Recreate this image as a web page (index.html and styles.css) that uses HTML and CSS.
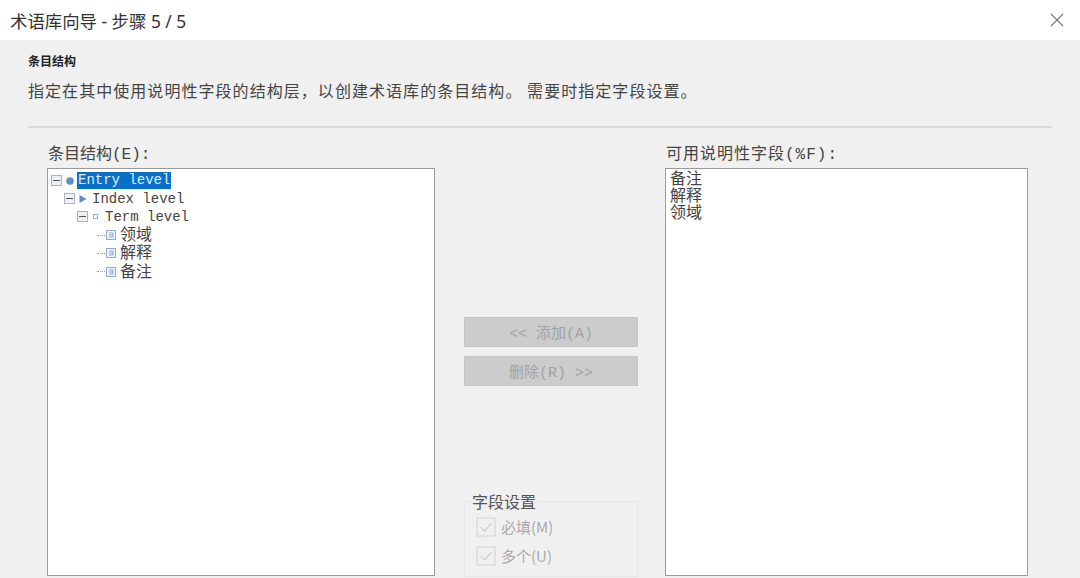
FILE: index.html
```html
<!DOCTYPE html>
<html lang="en">
<head>
    <meta charset="UTF-8">
    <meta name="viewport" content="width=device-width, initial-scale=1.0">
    <title>术语库向导</title>
    <link rel="stylesheet" href="styles.css">
</head>
<body>
    <div class="titlebar">
        <span class="title">术语库向导 - 步骤 5 / 5</span>
        <svg class="close" width="14" height="14" viewBox="0 0 14 14"><path d="M1 1 L13 13 M13 1 L1 13" stroke="#777" stroke-width="1.1" fill="none"/></svg>
    </div>

    <div class="content">
        <h1>条目结构</h1>
        <p class="desc">指定在其中使用说明性字段的结构层，以创建术语库的条目结构。 需要时指定字段设置。</p>
        <div class="divider"></div>

        <div class="columns">
            <!-- Entry structure tree -->
            <div class="col-left">
                <label class="field-label">条目结构(E):</label>
                <div class="listbox tree">
                    <div class="row">
                        <span class="toggle"></span>
                        <svg class="marker" width="10" height="10" viewBox="0 0 10 10"><circle cx="5" cy="5" r="3.8" fill="#5b8fc9"/></svg>
                        <span class="selected">Entry level</span>
                    </div>
                    <div class="row level-1">
                        <span class="toggle"></span>
                        <svg class="marker" width="10" height="10" viewBox="0 0 10 10"><path d="M1.5 1 L8.5 5 L1.5 9 Z" fill="#5b8fc9"/></svg>
                        <span class="node">Index level</span>
                    </div>
                    <div class="row level-2">
                        <span class="toggle"></span>
                        <svg class="marker" width="10" height="10" viewBox="0 0 10 10"><rect x="2.5" y="2.5" width="4" height="4" fill="none" stroke="#8fb2dc"/></svg>
                        <span class="node">Term level</span>
                    </div>
                    <div class="row level-3">
                        <span class="branch"></span>
                        <svg class="doc" width="10" height="10" viewBox="0 0 10 10"><rect x="0.5" y="0.5" width="9" height="9" fill="#eef4fc" stroke="#8fabd0"/><path d="M3 3 H7 V7 H3 M3 5 H7" stroke="#8fabd0" fill="none"/></svg>
                        <span class="node cjk">领域</span>
                    </div>
                    <div class="row level-3">
                        <span class="branch"></span>
                        <svg class="doc" width="10" height="10" viewBox="0 0 10 10"><rect x="0.5" y="0.5" width="9" height="9" fill="#eef4fc" stroke="#8fabd0"/><path d="M3 3 H7 V7 H3 M3 5 H7" stroke="#8fabd0" fill="none"/></svg>
                        <span class="node cjk">解释</span>
                    </div>
                    <div class="row level-3">
                        <span class="branch"></span>
                        <svg class="doc" width="10" height="10" viewBox="0 0 10 10"><rect x="0.5" y="0.5" width="9" height="9" fill="#eef4fc" stroke="#8fabd0"/><path d="M3 3 H7 V7 H3 M3 5 H7" stroke="#8fabd0" fill="none"/></svg>
                        <span class="node cjk">备注</span>
                    </div>
                </div>
            </div>

            <!-- Buttons and field settings -->
            <div class="col-middle">
                <div class="buttons">
                    <button disabled>&lt;&lt; 添加(A)</button>
                    <button disabled>删除(R) &gt;&gt;</button>
                </div>
                <fieldset class="settings">
                    <legend>字段设置</legend>
                    <div class="check">
                        <svg width="20" height="20" viewBox="0 0 20 20"><rect x="1" y="1" width="18" height="18" fill="#f0f0f0" stroke="#d2d2d2"/><path d="M4.5 10 L8.5 14 L15.5 6" stroke="#d0d0d0" stroke-width="1.3" fill="none"/></svg>
                        <span>必填(M)</span>
                    </div>
                    <div class="check">
                        <svg width="20" height="20" viewBox="0 0 20 20"><rect x="1" y="1" width="18" height="18" fill="#f0f0f0" stroke="#d2d2d2"/><path d="M4.5 10 L8.5 14 L15.5 6" stroke="#d0d0d0" stroke-width="1.3" fill="none"/></svg>
                        <span>多个(U)</span>
                    </div>
                </fieldset>
            </div>

            <!-- Available descriptive fields -->
            <div class="col-right">
                <label class="field-label wide">可用说明性字段(%F):</label>
                <div class="listbox fields">
                    <div>备注</div>
                    <div>解释</div>
                    <div>领域</div>
                </div>
            </div>
        </div>
    </div>
</body>
</html>
```

FILE: styles.css
```css
* {
    margin: 0;
    padding: 0;
    box-sizing: border-box;
}

html, body {
    height: 100%;
    overflow: hidden;
}

body {
    font-family: "Noto Sans CJK SC", sans-serif;
    background-color: #f0f0f0;
    color: #333;
}

.titlebar {
    height: 40px;
    background-color: #fff;
    display: flex;
    align-items: center;
    justify-content: space-between;
    padding: 0 16px 0 10px;
}

.title {
    font-family: "Noto Sans", "Noto Sans CJK SC", sans-serif;
    font-size: 17.4px;
    color: #333;
}

.content {
    padding: 13px 28px 0 28px;
}

h1 {
    font-size: 12px;
    line-height: 16px;
    font-weight: 700;
    color: #222;
}

.desc {
    font-size: 16px;
    line-height: 22px;
    letter-spacing: 1.05px;
    margin-top: 10px;
    color: #444;
}

.divider {
    height: 2px;
    background-color: #d9d9d9;
    margin-top: 25px;
    width: 1024px;
}

.columns {
    display: flex;
    margin-top: 16px;
    padding-left: 19px;
}

.col-left {
    width: 388px;
}

.col-middle {
    width: 174px;
    margin-left: 29px;
}

.col-right {
    width: 363px;
    margin-left: 27px;
}

.field-label {
    display: block;
    font-family: "Liberation Mono", "Noto Sans CJK SC", monospace;
    font-size: 16px;
    line-height: 22px;
    padding-left: 1px;
    color: #444;
}

.wide {
    letter-spacing: 1px;
}

.listbox {
    height: 408px;
    background-color: #fff;
    border: 1px solid #9a9a9a;
    margin-top: 2px;
}

.tree {
    padding: 2.5px 0 0 3px;
    font-family: "Liberation Mono", "Noto Sans CJK SC", monospace;
    font-size: 14px;
    color: #444;
}

.row {
    display: flex;
    align-items: center;
    height: 18.2px;
}

.level-1 {
    padding-left: 13px;
}

.level-2 {
    padding-left: 26px;
}

.level-3 {
    padding-left: 46px;
}

.toggle {
    width: 11px;
    height: 11px;
    border: 1px solid #a9b4c2;
    background-color: #eef1f5;
    display: flex;
    align-items: center;
    justify-content: center;
}

.toggle::before {
    content: "";
    width: 7px;
    height: 1px;
    background-color: #555;
}

.marker {
    margin-left: 3px;
}

.branch {
    width: 8px;
    border-top: 1px dotted #999;
}

.doc {
    margin-left: 1px;
}

.selected {
    background-color: #0a6fc9;
    color: #dfeeff;
    padding: 0 1px;
    margin-left: 2px;
    line-height: 17px;
}

.node {
    margin-left: 4px;
}

.cjk {
    font-family: "Noto Sans CJK SC", sans-serif;
    font-size: 16px;
    line-height: 16px;
    margin-left: 4px;
    margin-bottom: 4px;
}

.fields {
    padding: 0 0 0 4px;
    font-size: 16px;
    line-height: 17px;
    color: #444;
}

.buttons {
    padding-top: 173px;
    display: flex;
    flex-direction: column;
    gap: 9px;
}

button {
    height: 30px;
    width: 174px;
    background-color: #cccccc;
    border: 1px solid #c4c4c4;
    color: #a2a2a2;
    font-family: "Liberation Mono", "Noto Sans CJK SC", monospace;
    font-size: 15px;
}

.settings {
    margin-top: 105px;
    width: 174px;
    height: 86px;
    border: 1px solid #e6e6e6;
    padding: 1px 0 0 11px;
}

legend {
    font-size: 16px;
    line-height: 20px;
    padding: 0 1px;
    margin-left: -5px;
    color: #555;
}

.check {
    display: flex;
    align-items: center;
    gap: 5px;
    height: 29px;
    font-size: 15px;
    color: #aaa;
}
```
